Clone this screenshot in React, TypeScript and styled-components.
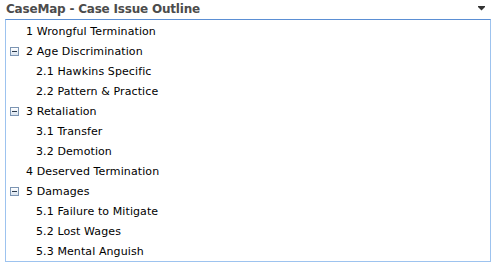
import React, { FC } from 'react'
import styled, { createGlobalStyle } from 'styled-components'

const GlobalStyle = createGlobalStyle`
  html, body {
    margin: 0;
    padding: 0;
    background: #ffffff;
  }
  body {
    font-family: 'DejaVu Sans', Verdana, sans-serif;
  }
`

const Part = styled.div`
  width: 496px;
  height: 268px;
  box-sizing: border-box;
  padding: 0 5px 0 5px;
  display: flex;
  flex-direction: column;
`

const Header = styled.div`
  height: 19px;
  display: flex;
  align-items: center;
  justify-content: space-between;
  padding: 0 6px 0 1px;
`

const Title = styled.span`
  font-size: 12px;
  font-weight: bold;
  color: #4c4c4c;
  letter-spacing: -0.2px;
  line-height: 19px;
`

const MenuArrow = styled.svg`
  display: block;
  margin-top: -2px;
`

const Body = styled.div`
  width: 486px;
  height: 243px;
  box-sizing: border-box;
  border: 1px solid #9dc3ef;
  border-top-color: #5b8fd4;
  padding-top: 2px;
  display: flex;
  flex-direction: column;
`

const Row = styled.div<{ $depth: number }>`
  height: 20px;
  display: flex;
  align-items: center;
  padding-left: ${p => (p.$depth === 0 ? 4 : 30)}px;
  font-size: 11px;
  letter-spacing: 0.1px;
  color: #000000;
  white-space: nowrap;
`

const Toggle = styled.span<{ $show: boolean }>`
  width: 9px;
  height: 9px;
  box-sizing: border-box;
  margin-right: 7px;
  border: 1px solid #7c95b3;
  background: linear-gradient(#ffffff, #d8e2ee);
  display: flex;
  align-items: center;
  justify-content: center;
  visibility: ${p => (p.$show ? 'visible' : 'hidden')};

  &::after {
    content: '';
    width: 5px;
    height: 1px;
    background: #2a3a4e;
  }
`

interface Issue {
  label: string
  children?: string[]
}

const issues: Issue[] = [
  { label: '1 Wrongful Termination' },
  { label: '2 Age Discrimination', children: ['2.1 Hawkins Specific', '2.2 Pattern & Practice'] },
  { label: '3 Retaliation', children: ['3.1 Transfer', '3.2 Demotion'] },
  { label: '4 Deserved Termination' },
  { label: '5 Damages', children: ['5.1 Failure to Mitigate', '5.2 Lost Wages', '5.3 Mental Anguish'] },
]

const App: FC = () => {
  return (
    <>
      <GlobalStyle />
      <Part>
        <Header>
          <Title>CaseMap - Case Issue Outline</Title>
          <MenuArrow width="7" height="5" viewBox="0 0 7 5">
            <rect x="0" y="0" width="7" height="1" fill="#333" />
            <path d="M0 1 H7 L3.5 4.5 Z" fill="#333" />
          </MenuArrow>
        </Header>
        <Body>
          {issues.map(issue => (
            <React.Fragment key={issue.label}>
              <Row $depth={0}>
                <Toggle $show={!!issue.children} />
                {issue.label}
              </Row>
              {issue.children?.map(child => (
                <Row $depth={1} key={child}>
                  {child}
                </Row>
              ))}
            </React.Fragment>
          ))}
        </Body>
      </Part>
    </>
  )
}

export default App
